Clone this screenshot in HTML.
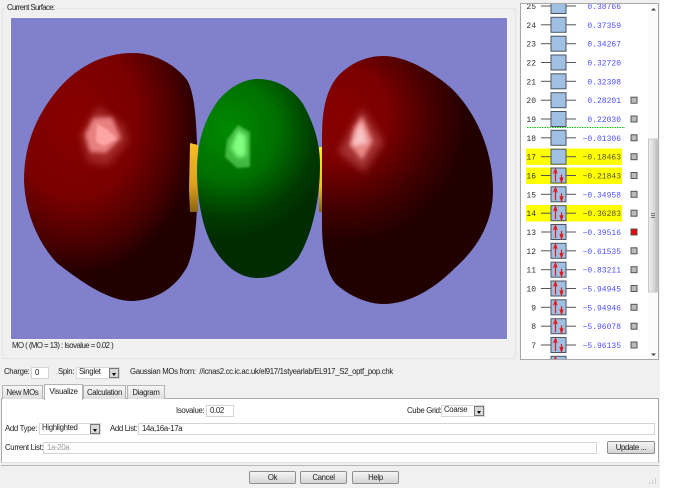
<!DOCTYPE html>
<html><head><meta charset="utf-8">
<style>
html,body{margin:0;padding:0;width:700px;height:488px;overflow:hidden;background:#fff}
body{position:relative;font-family:"Liberation Sans",sans-serif;font-size:7.8px;letter-spacing:-.32px;color:#222}
.a{position:absolute;white-space:nowrap}
.l{position:absolute;white-space:nowrap;line-height:10px}
.i{position:absolute;box-sizing:border-box;background:#fff;border:1px solid #d4d4d4;padding-left:3px;line-height:10px;white-space:nowrap;font-size:7.8px}
.c{position:absolute;box-sizing:border-box;background:#fff;border:1px solid #d8d8d8;padding-left:2px;line-height:8px;white-space:nowrap;font-size:7.8px}
.c b{position:absolute;right:0;top:0;bottom:0;width:10px;background:#d8d8d8;border:1px solid #777;box-sizing:border-box}
.c b:after{content:"";position:absolute;left:2px;top:4px;border:2px solid transparent;border-top:3px solid #000;border-bottom:0}
.t{position:absolute;box-sizing:border-box;top:385px;height:14px;background:linear-gradient(#f6f6f6,#dedede);border:1px solid #b4b4b4;border-bottom:0;text-align:center;line-height:13px;font-size:7.8px}
.b{position:absolute;box-sizing:border-box;height:13px;background:linear-gradient(#f4f4f4,#d4d4d4);border:1px solid #8e8e8e;border-radius:2px;text-align:center;line-height:11px;font-size:7.8px}
svg text{letter-spacing:0}
</style></head>
<body>
<div class="a" style="left:0;top:0;width:660px;height:488px;background:#f0f0f0"></div>

<div class="a" style="left:2px;top:8px;width:514px;height:351px;box-sizing:border-box;border:1px solid #dfe5e8;border-radius:2px"></div>
<div class="l" style="left:5px;top:3px;background:#f0f0f0;padding:0 2px;letter-spacing:-.6px">Current Surface:</div>

<svg class="a" style="left:0;top:0" width="700" height="488" viewBox="0 0 700 488">
<defs>
<radialGradient id="r1" gradientUnits="userSpaceOnUse" cx="0" cy="0" r="1" gradientTransform="translate(75 120) scale(125 155)">
<stop offset="0" stop-color="#880000"/><stop offset=".5" stop-color="#7a0000"/><stop offset=".8" stop-color="#4a0000"/><stop offset="1" stop-color="#220000"/>
</radialGradient>
<radialGradient id="r2" gradientUnits="userSpaceOnUse" cx="340" cy="115" r="135">
<stop offset="0" stop-color="#880000"/><stop offset=".35" stop-color="#7c0000"/><stop offset=".7" stop-color="#420000"/><stop offset=".95" stop-color="#220000"/>
</radialGradient>
<radialGradient id="g1" gradientUnits="userSpaceOnUse" cx="228" cy="130" r="110">
<stop offset="0" stop-color="#008a00"/><stop offset=".45" stop-color="#007000"/><stop offset=".8" stop-color="#003a00"/><stop offset="1" stop-color="#002c00"/>
</radialGradient>
<linearGradient id="y1" x1="0" y1="0" x2="0" y2="1"><stop offset="0" stop-color="#f8bc28"/><stop offset=".6" stop-color="#e0a020"/><stop offset="1" stop-color="#8a6410"/></linearGradient>
<linearGradient id="y2" x1="0" y1="0" x2="0" y2="1"><stop offset="0" stop-color="#ffee20"/><stop offset=".6" stop-color="#f0c020"/><stop offset="1" stop-color="#806010"/></linearGradient>
<linearGradient id="th" x1="0" y1="0" x2="1" y2="0"><stop offset="0" stop-color="#f0f0f0"/><stop offset=".5" stop-color="#dcdcdc"/><stop offset="1" stop-color="#b8b8b8"/></linearGradient>
<filter id="b0" x="-50%" y="-50%" width="200%" height="200%"><feGaussianBlur stdDeviation="1"/></filter>
<filter id="b1" x="-50%" y="-50%" width="200%" height="200%"><feGaussianBlur stdDeviation="2"/></filter>
<filter id="b2" x="-50%" y="-50%" width="200%" height="200%"><feGaussianBlur stdDeviation="4"/></filter>
<clipPath id="lc"><rect x="521" y="4" width="127" height="355"/></clipPath>
<g id="box"><line x1="541" x2="551" y1="0" y2="0" stroke="#555" stroke-width="1"/><line x1="566" x2="576" y1="0" y2="0" stroke="#555" stroke-width="1"/><rect x="551" y="-7.5" width="15" height="15" fill="#9fc0e2" stroke="#4c5660" stroke-width="1"/></g>
<g id="ar"><path d="M555.5 6V-5M553.5-2L555.5-6.500L557-2" fill="none" stroke="#e81818" stroke-width="1.200"/><path d="M561.500-1V5M560 2L561.500 6.500L563 2" fill="none" stroke="#e81818" stroke-width="1.200"/></g>
<rect id="sq" x="631" y="-3" width="6" height="6" fill="#bbb" stroke="#555" stroke-width="1"/>
</defs>

<rect x="10" y="17" width="498" height="323" fill="#f8f8fc"/>
<rect x="11" y="18" width="496" height="321" fill="#8080cc"/>

<path fill="url(#r1)" d="M133 53C158 53 178 68 187 80C194 92 196 115 197 145L197 205C196 235 193 252 188 265C178 285 158 301 130 301C105 300 75 277 57 263C40 245 25 215 24 180C24 140 40 110 60 87C80 65 105 53 133 53Z"/>
<polygon fill="#b84040" opacity=".6" filter="url(#b2)" points="98,106 124,125 128,142 108,166 88,162 80,135"/>
<polygon fill="#e88080" filter="url(#b1)" points="93,118 112,117 121,138 106,153 90,152 85,135"/>
<polygon fill="#ffa4a4" filter="url(#b0)" points="97,124 108,130 117,139 104,146 96,142"/>

<polygon points="190,143 198,145 198,212 190,212 189,190" fill="url(#y1)"/>
<polygon points="319,147 323,147 323,212 319,212" fill="url(#y2)"/>

<path fill="url(#g1)" d="M258 79C280 79 295 92 303 104C312 120 320 140 320 165C320 200 312 235 298 258C288 270 275 278 258 278C238 278 225 265 215 250C203 232 197 200 197 170C197 140 205 120 217 102C228 88 243 79 258 79Z"/>
<polygon fill="#48c048" filter="url(#b0)" opacity=".9" points="238,125 250,132 250,167 237,168 225,157 227,140"/>
<polygon fill="#80ff80" filter="url(#b1)" points="238,130 246,136 246,156 238,158 231,148"/>

<path fill="url(#r2)" d="M383 56C405 56 430 70 450 87C475 110 493 150 493 190C493 225 475 250 455 268C435 288 410 304 383 304C365 304 345 293 335 283C325 270 322 245 322 225L322 140C322 110 326 95 333 83C342 68 362 56 383 56Z"/>
<polygon fill="#b84848" opacity=".7" filter="url(#b2)" points="362,108 384,142 364,172 338,152"/>
<polygon fill="#e88888" filter="url(#b1)" points="362,116 373,141 362,160 350,145 354,128"/>
<polygon fill="#f8c4c4" filter="url(#b1)" points="361,122 368,143 352,146 356,132"/>

<rect x="520.5" y="3.5" width="138" height="356" fill="#fff" stroke="#a4a8a8"/>
<g clip-path="url(#lc)">
<rect x="526" y="148.5" width="96" height="16.5" fill="#ffff00"/>
<rect x="526" y="167.5" width="96" height="16.5" fill="#ffff00"/>
<rect x="526" y="205" width="96" height="16.5" fill="#ffff00"/>
<line x1="527" x2="625" y1="127.5" y2="127.5" stroke="#10c810" stroke-width="1" stroke-dasharray="1.500 1"/>
<g font-family="'Liberation Mono',monospace" font-size="8" fill="#333" text-anchor="end">
<text x="536" y="9">25</text><text x="536" y="27.8">24</text><text x="536" y="46.7">23</text><text x="536" y="65.5">22</text><text x="536" y="84.3">21</text><text x="536" y="103.2">20</text><text x="536" y="122">19</text><text x="536" y="140.8">18</text><text x="536" y="159.7">17</text><text x="536" y="178.5">16</text><text x="536" y="197.3">15</text><text x="536" y="216.2">14</text><text x="536" y="235">13</text><text x="536" y="253.8">12</text><text x="536" y="272.7">11</text><text x="536" y="291.5">10</text><text x="536" y="310.3">9</text><text x="536" y="329.2">8</text><text x="536" y="348">7</text>
</g>
<g font-family="'Liberation Mono',monospace" font-size="8" fill="#5050ff" text-anchor="end">
<text x="621" y="9">0.38766</text><text x="621" y="27.8">0.37359</text><text x="621" y="46.7">0.34267</text><text x="621" y="65.5">0.32720</text><text x="621" y="84.3">0.32398</text><text x="621" y="103.2">0.28201</text><text x="621" y="122">0.22030</text><text x="621" y="140.8">−0.01306</text><text x="621" y="159.7" fill="#55553a">−0.18463</text><text x="621" y="178.5" fill="#55553a">−0.21843</text><text x="621" y="197.3">−0.34958</text><text x="621" y="216.2" fill="#55553a">−0.36283</text><text x="621" y="235">−0.39516</text><text x="621" y="253.8">−0.61535</text><text x="621" y="272.7">−0.83211</text><text x="621" y="291.5">−5.94945</text><text x="621" y="310.3">−5.94946</text><text x="621" y="329.2">−5.96078</text><text x="621" y="348">−5.96135</text>
</g>
<use href="#box" y="6"/><use href="#box" y="24.8"/><use href="#box" y="43.7"/><use href="#box" y="62.5"/><use href="#box" y="81.3"/><use href="#box" y="100.2"/><use href="#box" y="119"/><use href="#box" y="137.8"/><use href="#box" y="156.7"/><use href="#box" y="175.5"/><use href="#box" y="194.3"/><use href="#box" y="213.2"/><use href="#box" y="232"/><use href="#box" y="250.8"/><use href="#box" y="269.7"/><use href="#box" y="288.5"/><use href="#box" y="307.3"/><use href="#box" y="326.2"/><use href="#box" y="345"/><use href="#box" y="363.8"/>
<use href="#ar" y="175.5"/><use href="#ar" y="194.3"/><use href="#ar" y="213.2"/><use href="#ar" y="232"/><use href="#ar" y="250.8"/><use href="#ar" y="269.7"/><use href="#ar" y="288.5"/><use href="#ar" y="307.3"/><use href="#ar" y="326.2"/><use href="#ar" y="345"/><use href="#ar" y="363.8"/>
<use href="#sq" y="100.2"/><use href="#sq" y="119"/><use href="#sq" y="137.8"/><use href="#sq" y="156.7"/><use href="#sq" y="175.5"/><use href="#sq" y="194.3"/><use href="#sq" y="213.2"/><use href="#sq" y="250.8"/><use href="#sq" y="269.7"/><use href="#sq" y="288.5"/><use href="#sq" y="307.3"/><use href="#sq" y="326.2"/><use href="#sq" y="345"/>
<rect x="631" y="229" width="6" height="6" fill="#f00000" stroke="#555" stroke-width="1"/>
</g>
<rect x="648" y="4" width="10" height="355" fill="#fbfbfb"/>
<rect x="648.500" y="139" width="9.500" height="153" fill="url(#th)" stroke="#c8c8c8" stroke-width="1"/>
<path d="M651 213.500h4M651 215.500h4M651 217.500h4" stroke="#777" stroke-width="1"/>
<path d="M651 10.500h5l-2.500-2.500z" fill="#444"/>
<path d="M651 353.500h5l-2.500 2.500z" fill="#444"/>
<path d="M655 481h1M652 483h1M655 483h1M649 485h1M652 485h1M655 485h1" stroke="#aaa" stroke-width="1" transform="translate(0,-2)"/>
</svg>

<div class="l" style="left:12px;top:341px;letter-spacing:-.53px">MO ( (MO = 13) : Isovalue = 0.02 )</div>

<div class="l" style="left:4px;top:367px">Charge:</div>
<div class="i" style="left:31px;top:367px;width:18px;height:12px">0</div>
<div class="l" style="left:58px;top:367px">Spin:</div>
<div class="c" style="left:76px;top:367px;width:44px;height:12px">Singlet<b></b></div>
<div class="l" style="left:130px;top:367px">Gaussian MOs from:&nbsp; //icnas2.cc.ic.ac.uk/el917/1styearlab/EL917_S2_optf_pop.chk</div>

<div class="a" style="left:1px;top:398px;width:658px;height:65px;box-sizing:border-box;background:#fff;border:1px solid #a8acac;border-bottom-color:#e4e4e4"></div>
<div class="t" style="left:2px;width:41px">New MOs</div>
<div class="t" style="left:44px;top:384px;height:16px;width:39px;background:#fff;z-index:2">Visualize</div>
<div class="t" style="left:83px;width:43px">Calculation</div>
<div class="t" style="left:127px;width:38px">Diagram</div>

<div class="l" style="left:176px;top:406px">Isovalue:</div>
<div class="i" style="left:206px;top:405px;width:28px;height:12px">0.02</div>
<div class="l" style="left:407px;top:406px">Cube Grid:</div>
<div class="c" style="left:441px;top:405px;width:44px;height:12px">Coarse<b></b></div>

<div class="l" style="left:5px;top:424px">Add Type:</div>
<div class="c" style="left:39px;top:423px;width:62px;height:12px">Highlighted<b></b></div>
<div class="l" style="left:110px;top:424px">Add List:</div>
<div class="i" style="left:138px;top:423px;width:517px;height:12px">14a,16a-17a</div>
<div class="l" style="left:5px;top:443px">Current List:</div>
<div class="i" style="left:43px;top:442px;width:554px;height:12px;color:#999">1a-20a</div>
<div class="b" style="left:607px;top:441px;width:48px">Update ...</div>

<div class="a" style="left:1px;top:465px;width:658px;height:1px;background:#b4b8b8"></div>
<div class="b" style="left:249px;top:471px;width:47px">Ok</div>
<div class="b" style="left:300px;top:471px;width:47px">Cancel</div>
<div class="b" style="left:352px;top:471px;width:47px">Help</div>
</body></html>
